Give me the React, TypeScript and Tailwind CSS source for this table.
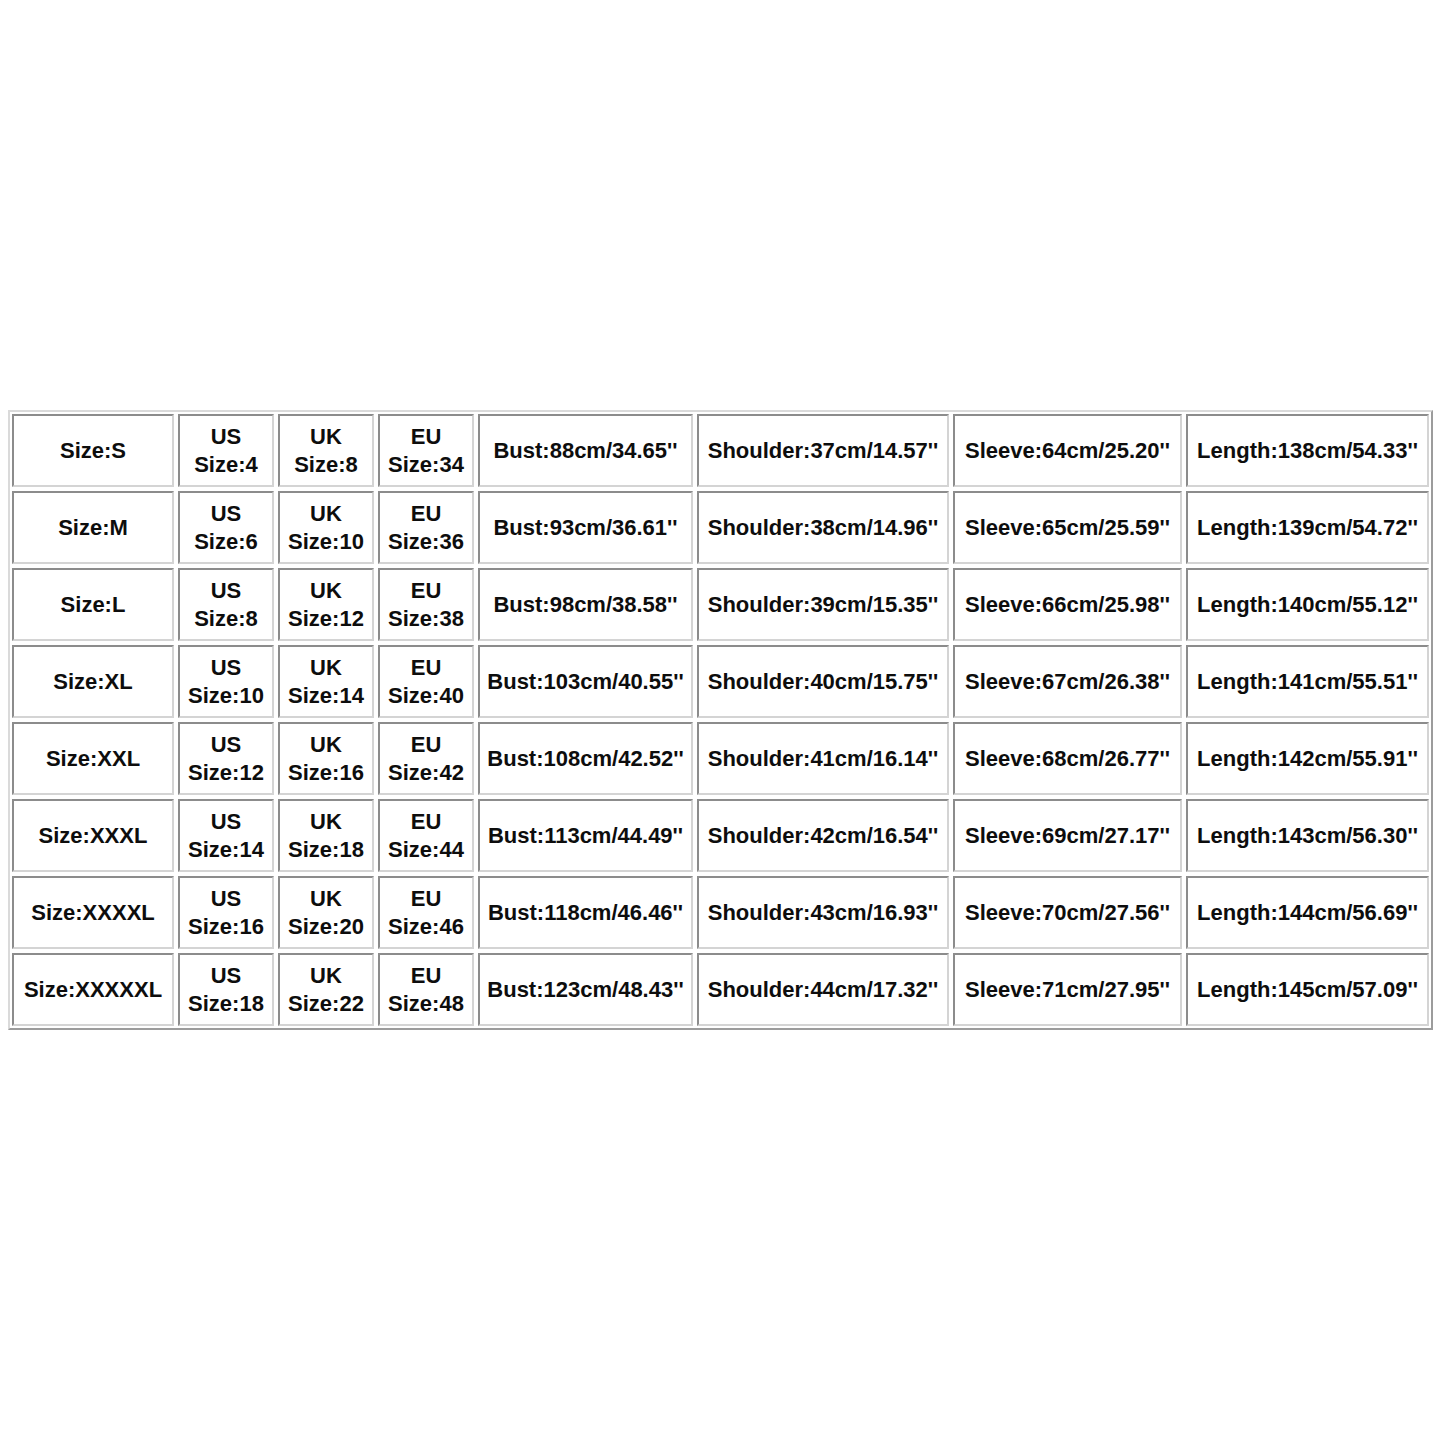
const rows = [
  ["S", "4", "8", "34", "88cm/34.65", "37cm/14.57", "64cm/25.20", "138cm/54.33"],
  ["M", "6", "10", "36", "93cm/36.61", "38cm/14.96", "65cm/25.59", "139cm/54.72"],
  ["L", "8", "12", "38", "98cm/38.58", "39cm/15.35", "66cm/25.98", "140cm/55.12"],
  ["XL", "10", "14", "40", "103cm/40.55", "40cm/15.75", "67cm/26.38", "141cm/55.51"],
  ["XXL", "12", "16", "42", "108cm/42.52", "41cm/16.14", "68cm/26.77", "142cm/55.91"],
  ["XXXL", "14", "18", "44", "113cm/44.49", "42cm/16.54", "69cm/27.17", "143cm/56.30"],
  ["XXXXL", "16", "20", "46", "118cm/46.46", "43cm/16.93", "70cm/27.56", "144cm/56.69"],
  ["XXXXXL", "18", "22", "48", "123cm/48.43", "44cm/17.32", "71cm/27.95", "145cm/57.09"],
];

function Cell({ children }: { children: React.ReactNode }) {
  return (
    <div className="flex flex-col items-center justify-center whitespace-nowrap border-2 border-t-[#8c8c8c] border-l-[#8c8c8c] border-r-[#d4d4d4] border-b-[#d4d4d4] bg-white text-center leading-[28px]">
      {children}
    </div>
  );
}

export default function App() {
  return (
    <div className="min-h-screen bg-white pl-2 pt-[410px] font-['Liberation_Sans',Arial,sans-serif] text-[22px] font-bold text-[#0d0d0d]">
      <div className="inline-block border-2 border-t-[#dadada] border-l-[#dadada] border-r-[#9c9c9c] border-b-[#9c9c9c] p-[2px]">
        <div className="grid grid-cols-[162px_96px_96px_96px_215px_252px_229px_243px] auto-rows-[73px] gap-1">
          {rows.map((r) => (
            <div key={r[0]} className="contents">
              <Cell>Size:{r[0]}</Cell>
              <Cell>
                <span>US</span>
                <span>Size:{r[1]}</span>
              </Cell>
              <Cell>
                <span>UK</span>
                <span>Size:{r[2]}</span>
              </Cell>
              <Cell>
                <span>EU</span>
                <span>Size:{r[3]}</span>
              </Cell>
              <Cell>Bust:{r[4]}''</Cell>
              <Cell>Shoulder:{r[5]}''</Cell>
              <Cell>Sleeve:{r[6]}''</Cell>
              <Cell>Length:{r[7]}''</Cell>
            </div>
          ))}
        </div>
      </div>
    </div>
  );
}
